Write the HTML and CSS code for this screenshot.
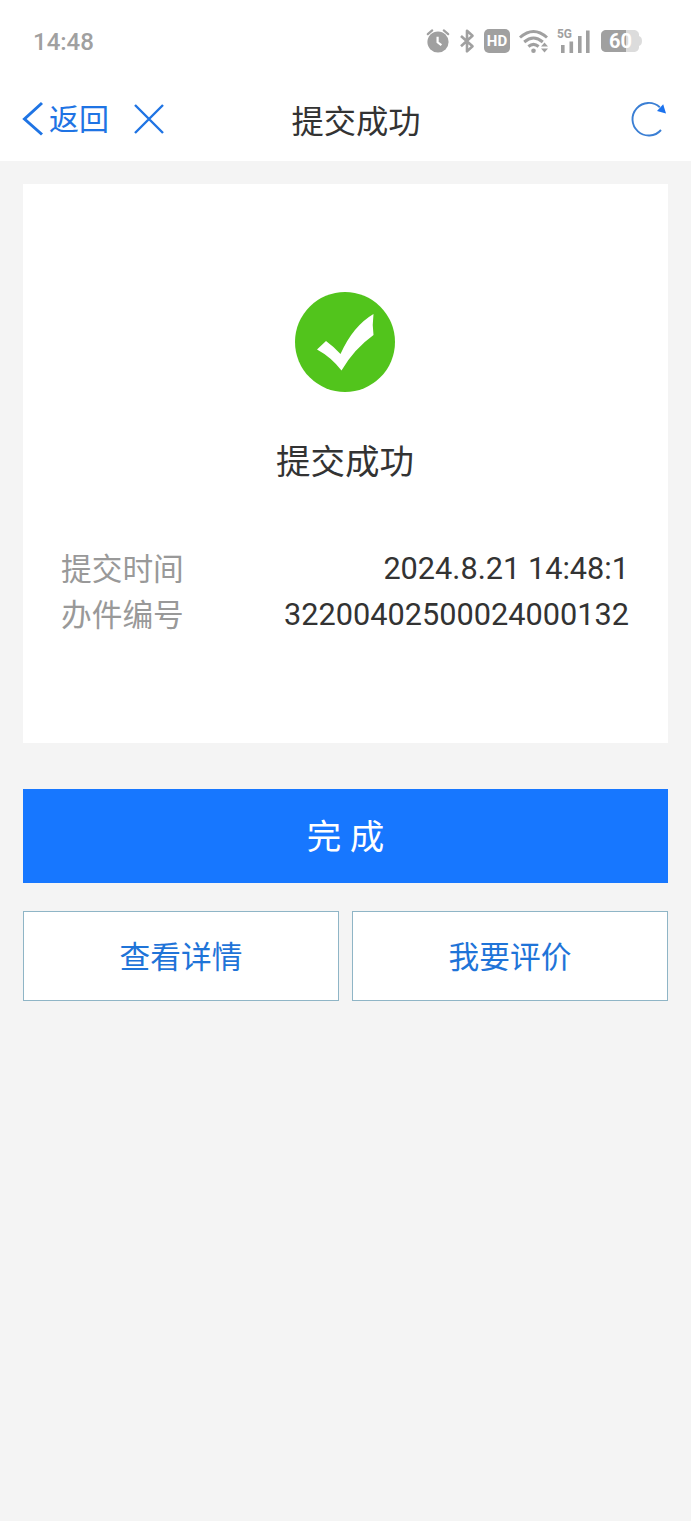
FILE: index.html
```html
<!DOCTYPE html>
<html lang="zh-CN">
<head>
  <meta charset="UTF-8" />
  <meta name="viewport" content="width=device-width, initial-scale=1.0"/>
  <title>提交成功</title>
  <link rel="stylesheet" href="styles.css">
</head>
<body>
  <div class="status-bar">
    <span class="clock">14:48</span>
    <div class="status-icons">
      <!-- alarm -->
      <svg class="icon-alarm" width="24" height="26" viewBox="0 0 24 26">
        <circle cx="12" cy="14" r="10.6" fill="#a0a0a0"/>
        <path d="M1.8 6.2L6.2 2.4M17.8 2.4l4.4 3.8" stroke="#a0a0a0" stroke-width="2.2" stroke-linecap="round"/>
        <path d="M11.6 8.700v5.6l3.8 2.8" fill="none" stroke="#fff" stroke-width="2.2"/>
      </svg>
      <!-- bluetooth -->
      <svg class="icon-bluetooth" width="16" height="26" viewBox="0 0 16 26">
        <path d="M2 8l11.5 10.3L8 23.4V2.8l5.5 5L2 18.3" fill="none" stroke="#a0a0a0" stroke-width="2.6" stroke-linejoin="round"/>
      </svg>
      <!-- HD -->
      <span class="hd">HD</span>
      <!-- wifi -->
      <svg class="icon-wifi" width="30" height="26" viewBox="0 0 30 26">
        <g fill="none" stroke="#a0a0a0" stroke-width="3">
          <path d="M1 9.5Q14.5 -2.500 28 9.5"/>
          <path d="M5.2 14Q14.5 6 23.8 14"/>
          <path d="M9.4 18.5Q14.5 14.2 19.6 18.5"/>
        </g>
        <circle cx="14.5" cy="22.7" r="2.3" fill="#a0a0a0"/>
        <path d="M22 18.5l3.5-4 3.5 4zM22 20.5h7l-3.5 4z" fill="#a0a0a0"/>
      </svg>
      <!-- signal -->
      <svg class="icon-signal" width="34" height="28" viewBox="0 0 34 28">
        <text class="net" x="0" y="11" textLength="15" lengthAdjust="spacingAndGlyphs">5G</text>
        <path d="M4 18h3.6v8H4zM12.5 14.500h3.6v11.500h-3.6zM21 9h3.6v17H21zM29 3.500h3.6v22.500H29z" fill="#a0a0a0"/>
      </svg>
      <!-- battery -->
      <svg class="icon-battery" width="43" height="24" viewBox="0 0 43 24">
        <path d="M7 1h26c4 0 6 2 6 5v12c0 3-2 5-6 5H7c-4 0-6-2-6-5V6c0-3 2-5 6-5z" fill="#dcdcdc"/>
        <path d="M39 7c4 1 4 9 0 10z" fill="#dcdcdc"/>
        <path d="M7 1h19v22H7c-4 0-6-2-6-5V6c0-3 2-5 6-5z" fill="#a0a0a0"/>
        <text class="level" x="9" y="19" textLength="23">60</text>
      </svg>
    </div>
  </div>

  <div class="nav">
    <div class="nav-left">
      <svg width="22" height="36" viewBox="0 0 22 36">
        <path d="M20 2L2.500 18 20 33.500" fill="none" stroke="#1f74e4" stroke-width="3"/>
      </svg>
      <span class="back">返回</span>
      <svg class="close" width="32" height="32" viewBox="0 0 32 32">
        <path d="M2 2l28 28M30 2L2 30" fill="none" stroke="#1f74e4" stroke-width="2.4"/>
      </svg>
    </div>
    <h1>提交成功</h1>
    <svg class="refresh" width="36" height="36" viewBox="0 0 36 36">
      <path d="M29.8 6.2A16.300 16.300 0 1 0 31 29" fill="none" stroke="#3b7fd4" stroke-width="1.9"/>
      <path d="M27 10L33.2 3.300 36 12.500z" fill="#1b72ee"/>
    </svg>
  </div>

  <div class="container">
    <div class="card">
      <svg class="success" width="100" height="100" viewBox="0 0 100 100">
        <circle cx="50" cy="50" r="50" fill="#52c41c"/>
        <path d="M22 57.500L31 49Q38 54 45.500 62Q58 34 78.500 22Q77 33 78.500 43Q59 57 46.500 78.500Q36 65 22 57.500z" fill="#fff"/>
      </svg>
      <h2>提交成功</h2>
      <div class="row">
        <span class="label">提交时间</span>
        <span class="value">2024.8.21 14:48:1</span>
      </div>
      <div class="row">
        <span class="label">办件编号</span>
        <span class="value">32200402500024000132</span>
      </div>
    </div>

    <button class="btn primary">完 成</button>
    <div class="btn-group">
      <button class="btn">查看详情</button>
      <button class="btn">我要评价</button>
    </div>
  </div>
</body>
</html>
```
FILE: styles.css
```css
* {
  box-sizing: border-box;
}

body {
  margin: 0;
  min-height: 100vh;
  font-family: Roboto, "Noto Sans CJK SC", sans-serif;
  color: #333;
  background-color: #f4f4f4;
}

svg {
  display: block;
}

h1, h2 {
  margin: 0;
  font-weight: normal;
}

.status-bar {
  display: flex;
  justify-content: space-between;
  align-items: center;
  height: 82px;
  padding: 0 48px 0 33px;
  background: white;
}

.clock {
  padding-top: 2px;
  font-size: 24px;
  font-weight: 500;
  color: #a0a0a0;
}

.status-icons {
  display: flex;
  align-items: center;
}

.icon-bluetooth {
  margin-left: 9px;
}

.hd {
  width: 26px;
  height: 24px;
  margin-left: 9px;
  border-radius: 5px;
  background: #a0a0a0;
  color: white;
  font-size: 15px;
  font-weight: bold;
  line-height: 25px;
  text-align: center;
}

.icon-wifi {
  margin-left: 9px;
}

.icon-signal {
  margin-left: 8px;
}

.net {
  font-size: 13px;
  font-weight: bold;
  fill: #a0a0a0;
}

.icon-battery {
  margin-left: 9px;
}

.level {
  font-size: 20px;
  font-weight: bold;
  fill: white;
}

.nav {
  display: grid;
  grid-template-columns: 1fr auto 1fr;
  align-items: center;
  height: 79px;
  padding: 0 1px 5px 22px;
  background: white;
}

.nav-left {
  display: flex;
  align-items: center;
  color: #1f74e4;
}

.back {
  margin-left: 5px;
  padding-top: 2px;
  font-size: 30px;
  line-height: 36px;
}

.close {
  margin-left: 24px;
}

.nav h1 {
  padding-top: 5px;
  font-size: 32.3px;
  line-height: 40px;
}

.refresh {
  justify-self: end;
  margin-right: 24px;
}

.container {
  padding: 23px;
}

.card {
  height: 559px;
  padding: 108px 39px 0 38px;
  background: white;
}

.success {
  margin: 0 auto;
}

.card h2 {
  margin: 46px 0 60px;
  font-size: 34.5px;
  line-height: 48px;
  text-align: center;
}

.row {
  display: flex;
  justify-content: space-between;
  height: 46px;
  font-size: 30.7px;
  line-height: 46px;
}

.label {
  padding-top: 1px;
  color: #999;
}

.btn {
  flex: 1;
  height: 90px;
  padding: 0 0 4px;
  border: 1px solid #8fb5c6;
  background: white;
  color: #1f74d8;
  font-family: inherit;
  font-size: 30.7px;
}

.btn.primary {
  display: block;
  width: 100%;
  height: 94px;
  margin: 46px 0 28px;
  border: none;
  background: #1777ff;
  color: white;
  font-size: 34.5px;
}

.btn-group {
  display: flex;
  gap: 13px;
}
```
